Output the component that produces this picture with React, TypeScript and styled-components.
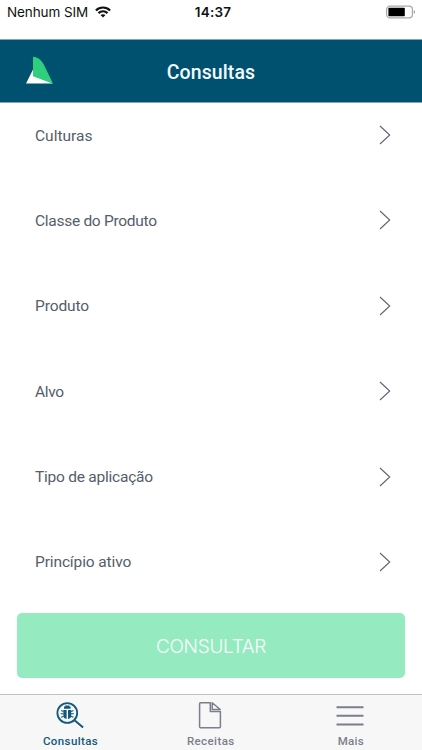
import React from 'react';
import styled, { createGlobalStyle } from 'styled-components';

const GlobalStyle = createGlobalStyle`
  * { box-sizing: border-box; }
  html, body { margin: 0; background: #fff; overflow: hidden; }
`;

const Screen = styled.div`
  width: 100%;
  height: 750px;
  display: flex;
  flex-direction: column;
  background: #fff;
  font-family: Roboto, sans-serif;
`;

const StatusBar = styled.div`
  height: 39px;
  flex: none;
  display: grid;
  grid-template-columns: 1fr auto 1fr;
  align-items: start;
  padding: 2px 6px 0 7px;
  color: #111;
  font: 400 13.5px/20px Inter, sans-serif;
`;

const Carrier = styled.div`
  display: flex;
  align-items: center;
  gap: 7px;
  letter-spacing: -0.1px;
`;

const Clock = styled.div`
  font-weight: 600;
  letter-spacing: 0.2px;
  margin-left: 3px;
`;

const BatterySlot = styled.div`
  display: flex;
  justify-content: flex-end;
  padding-top: 3px;
`;

const Header = styled.header`
  height: 64px;
  flex: none;
  display: grid;
  grid-template-columns: 80px 1fr 80px;
  align-items: center;
  background: #00506f;
  border: solid #7fa7b7;
  border-width: 1px 0;
`;

const LogoSlot = styled.div`
  display: flex;
  padding: 0 0 3px 25px;
`;

const Title = styled.h1`
  margin: 0;
  padding-top: 3px;
  text-align: center;
  color: #f2fbff;
  font: 500 19.5px/24px Roboto, sans-serif;
  letter-spacing: 0.1px;
`;

const List = styled.main`
  flex: none;
  display: flex;
  flex-direction: column;
  gap: 20.4px;
  margin-top: -0.5px;
`;

const Row = styled.div`
  height: 65px;
  display: flex;
  align-items: center;
  justify-content: space-between;
  padding: 0 31px 0 35px;
`;

const Label = styled.span<{ $spacing: number }>`
  color: #555d6b;
  font-size: 15.5px;
  line-height: 20px;
  padding-top: 1px;
  letter-spacing: ${(p) => p.$spacing}px;
`;

const SubmitButton = styled.button`
  height: 64.5px;
  flex: none;
  margin: 19px 17px 0;
  padding: 2px 0 0;
  border: 0;
  border-radius: 5px;
  background: #95eac0;
  color: #f8fffb;
  font: 300 19px/24px Inter, sans-serif;
  letter-spacing: -0.3px;
`;

const TabBar = styled.nav`
  height: 56px;
  flex: none;
  margin-top: auto;
  display: grid;
  grid-template-columns: repeat(3, 1fr);
  padding-right: 1.5px;
  border-top: 1px solid #c3c3c5;
  background: #f7f7f8;
`;

const Tab = styled.div<{ $active?: boolean }>`
  display: flex;
  flex-direction: column;
  align-items: center;
  padding-top: 6px;
  color: ${(p) => (p.$active ? '#12597a' : '#7b7e8b')};
  svg { display: block; }
`;

const TabLabel = styled.span<{ $spacing: number }>`
  margin-top: 5px;
  font-size: 11.5px;
  font-weight: 500;
  line-height: 14px;
  padding-left: 1px;
  letter-spacing: ${(p) => p.$spacing}px;
`;

const WifiIcon = () => (
  <svg width="16" height="12" viewBox="0 0 16 12" fill="none" stroke="#111" strokeWidth="2.2">
    <path d="M.9 4.5C4.9.5 11.1.5 15.1 4.5" />
    <path d="M3.5 7.1c2.5-2.5 6.5-2.5 9 0" />
    <path d="M8 11.6 5.5 9.1c1.4-1.3 3.6-1.3 5 0z" fill="#111" stroke="none" />
  </svg>
);

const BatteryIcon = () => (
  <svg width="31" height="14" viewBox="0 0 31 14">
    <rect x="1.6" y="1.1" width="25.8" height="11.8" rx="3.4" fill="none" stroke="#aaa" strokeWidth="1.3" />
    <rect x="3.4" y="2.8" width="16.4" height="8.4" rx=".8" fill="#000" />
    <path d="M28.8 5v4c1.6-.6 1.6-3.4 0-4z" fill="#999" />
  </svg>
);

const Logo = () => (
  <svg width="29" height="28" viewBox="0 0 29 28">
    <path d="M8 13.5 1 27.4h27L9 20z" fill="#fff" />
    <path d="M8 1.5Q8 .6 9 .8C14 1.8 17.4 5 19.6 10.3L28 27.4 8 20.2z" fill="#2fcf7d" />
  </svg>
);

const ChevronIcon = () => (
  <svg width="12" height="20" viewBox="0 0 12 20" fill="none" stroke="#606672" strokeWidth="1.15">
    <path d="M1 1 10.7 10 1 19" />
  </svg>
);

const BugSearchIcon = () => (
  <svg width="28" height="28" viewBox="0 0 28 28" fill="none" stroke="currentColor">
    <circle cx="11.3" cy="12" r="9.9" strokeWidth="1.8" />
    <path d="m18.5 19.2 8.6 7.2" strokeWidth="2" />
    <path d="M9.2 4.4h4.2v1.2h1.2v2.1H8V5.6h1.2z" fill="currentColor" stroke="none" />
    <path d="M7.4 8.9h3.2v9c-2 0-3.2-1.2-3.2-2.8zM12 8.9h3.2v6.2c0 1.6-1.2 2.8-3.2 2.8z" fill="currentColor" stroke="none" />
    <path d="M5.2 9.5 7.6 10.5M4.7 12.8h2.9M5.2 16.2l2.4-1M17.4 9.5l-2.4 1M17.9 12.8H15M17.4 16.2l-2.4-1" strokeWidth="1.1" />
  </svg>
);

const FileIcon = () => (
  <svg width="24" height="28" viewBox="0 0 24 28" fill="none" stroke="currentColor" strokeWidth="1.5" strokeLinejoin="round">
    <path d="M12.3 1.7H2.6Q1.6 1.7 1.6 2.7v23q0 1 1 1h18.8q1 0 1-1V10.6H12.3z" />
    <path d="M14.2 1.7v6.8h8z" />
  </svg>
);

const MenuIcon = () => (
  <svg width="28" height="28" viewBox="0 0 28 28" fill="none" stroke="currentColor" strokeWidth="2">
    <path d="M.5 6.3h27M.5 14.8h27M.5 23.4h27" />
  </svg>
);

const filters = [
  { label: 'Culturas', spacing: 0 },
  { label: 'Classe do Produto', spacing: -0.28 },
  { label: 'Produto', spacing: -0.1 },
  { label: 'Alvo', spacing: -0.3 },
  { label: 'Tipo de aplicação', spacing: -0.23 },
  { label: 'Princípio ativo', spacing: -0.12 },
];

const tabs = [
  { label: 'Consultas', spacing: 0.4, Icon: BugSearchIcon, active: true },
  { label: 'Receitas', spacing: 0.4, Icon: FileIcon, active: false },
  { label: 'Mais', spacing: 0.3, Icon: MenuIcon, active: false },
];

export default function App() {
  return (
    <Screen>
      <GlobalStyle />
      <StatusBar>
        <Carrier>Nenhum SIM <WifiIcon /></Carrier>
        <Clock>14:37</Clock>
        <BatterySlot><BatteryIcon /></BatterySlot>
      </StatusBar>
      <Header>
        <LogoSlot><Logo /></LogoSlot>
        <Title>Consultas</Title>
      </Header>
      <List>
        {filters.map((f) => (
          <Row key={f.label}>
            <Label $spacing={f.spacing}>{f.label}</Label>
            <ChevronIcon />
          </Row>
        ))}
      </List>
      <SubmitButton>CONSULTAR</SubmitButton>
      <TabBar>
        {tabs.map(({ label, spacing, Icon, active }) => (
          <Tab key={label} $active={active}>
            <Icon />
            <TabLabel $spacing={spacing}>{label}</TabLabel>
          </Tab>
        ))}
      </TabBar>
    </Screen>
  );
}
